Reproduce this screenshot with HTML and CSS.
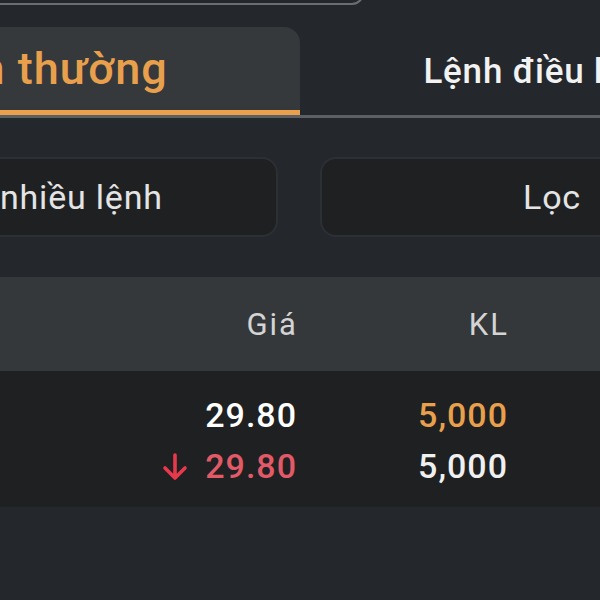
FILE: index.html
```html
<!DOCTYPE html>
<html lang="vi">
<head>
    <meta charset="UTF-8">
    <meta name="viewport" content="width=device-width, initial-scale=1.0">
    <title>Sổ lệnh</title>
    <link rel="stylesheet" href="styles.css">
</head>
<body>

    <div class="screen">
        <div class="search-box"></div>

        <!-- Tabs -->
        <div class="tabs">
            <div class="tab active">Lệnh thường</div>
            <div class="tab">Lệnh điều kiện</div>
        </div>

        <!-- Actions -->
        <div class="actions">
            <button class="action-btn">Hủy nhiều lệnh</button>
            <button class="action-btn">Lọc</button>
        </div>

        <!-- Order table -->
        <div class="order-table">
            <div class="table-head">
                <span></span>
                <span class="col">Giá</span>
                <span class="col">KL</span>
                <span></span>
            </div>
            <div class="table-body">
                <div class="row">
                    <span></span>
                    <span class="col price">29.80</span>
                    <span class="col volume match">5,000</span>
                    <span></span>
                </div>
                <div class="row">
                    <span></span>
                    <span class="col price down">
                        <svg class="arrow" width="26" height="28" viewBox="0 0 26 28">
                            <path d="M13 2 V25 M3 15 L13 25 L23 15" fill="none" stroke="currentColor" stroke-width="3.6" stroke-linecap="round" stroke-linejoin="round"/>
                        </svg>
                        29.80
                    </span>
                    <span class="col volume">5,000</span>
                    <span></span>
                </div>
            </div>
        </div>
    </div>

</body>
</html>
```

FILE: styles.css
```css
body {
    margin: 0;
    padding: 0;
    background: #24282c;
    font-family: Roboto, "Noto Sans", sans-serif;
    overflow: hidden;
}
.screen {
    width: 600px;
    height: 600px;
    overflow: hidden;
}
.search-box {
    width: 560px;
    height: 40px;
    margin: -39px 0 0 -200px;
    border: 2px solid #6a6e72;
    border-radius: 0 0 12px 0;
}
.tabs {
    display: flex;
    margin: 22px 0 0 -229px;
    width: 1029px;
    border-bottom: 3px solid #5c6064;
}
.tab {
    width: 486px;
    height: 88px;
    display: flex;
    align-items: center;
    justify-content: center;
    color: #f2f2f2;
    font-size: 35px;
    font-weight: 500;
    letter-spacing: 0.8px;
}
.tab.active {
    width: 529px;
    background: #36393c;
    border-radius: 0 16px 0 0;
    box-shadow: inset 0 -5px 0 #e9a04c;
    color: #e9a04c;
    font-size: 45px;
    letter-spacing: 1px;
    padding-bottom: 6px;
    box-sizing: border-box;
}
.actions {
    display: flex;
    gap: 42px;
    margin: 39px 0 0 -186px;
}
.action-btn {
    width: 464px;
    height: 80px;
    flex-shrink: 0;
    background: #1f2022;
    border: 2px solid #2c3034;
    border-radius: 16px;
    color: #e4e4e4;
    font-family: Roboto, "Noto Sans", sans-serif;
    font-size: 34px;
    letter-spacing: 0.8px;
    padding: 0;
}
.order-table {
    margin-top: 40px;
}
.table-head,
.row {
    display: grid;
    grid-template-columns: 107px 190px 211px 1fr;
    align-items: center;
}
.table-head {
    height: 94px;
    background: #35383b;
    color: #d4d4d4;
    font-size: 31px;
    letter-spacing: 2px;
}
.table-head .col {
    margin-right: -1px;
}
.table-body {
    background: #1f2022;
    padding: 18px 0 16px;
}
.row {
    height: 51px;
    color: #ffffff;
    font-size: 34px;
    font-weight: 500;
    letter-spacing: 1px;
}
.col {
    text-align: right;
    white-space: nowrap;
}
.volume {
    color: #f0f0f0;
}
.volume.match {
    color: #e9a04c;
}
.price.down {
    color: #e25a68;
}
.arrow {
    color: #e8394c;
    vertical-align: -3px;
    margin-right: 8px;
}
```
